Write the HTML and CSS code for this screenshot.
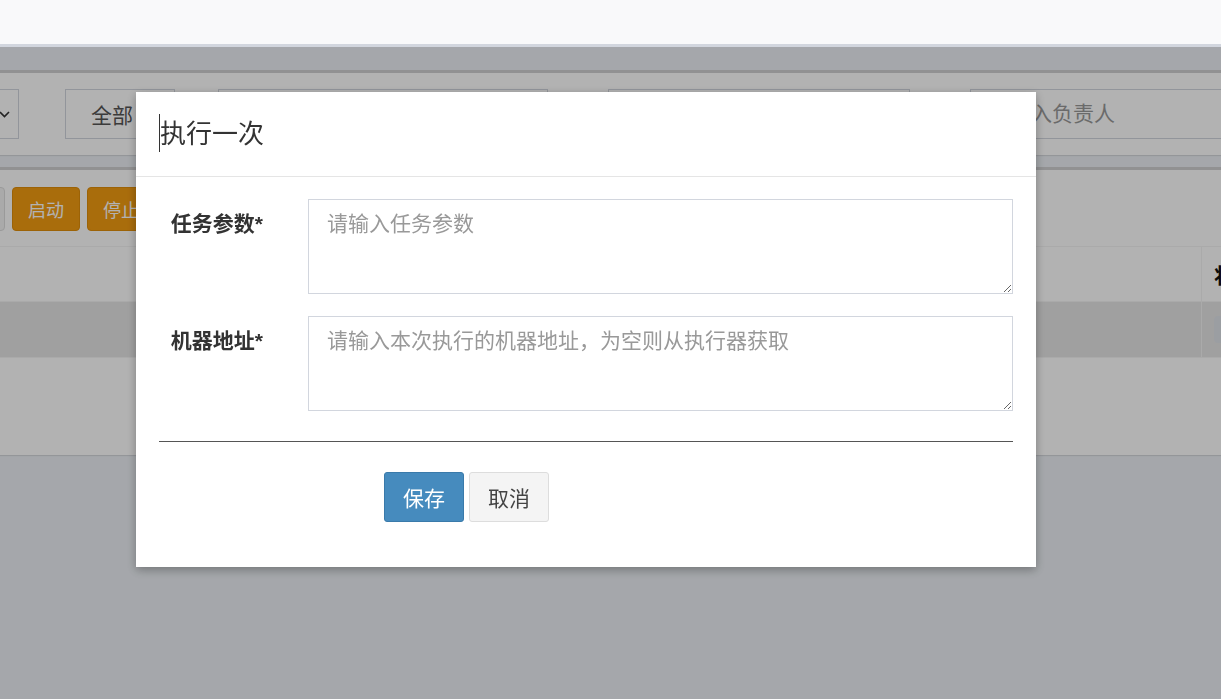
FILE: index.html
```html
<!DOCTYPE html>
<html lang="zh-CN">
<head>
    <meta charset="UTF-8">
    <meta name="viewport" content="width=device-width, initial-scale=1.0">
    <title>执行一次</title>
    <link rel="stylesheet" href="styles.css">
</head>
<body>
    <div class="topbar"></div>

    <div class="frame">
        <div class="box filter-box">
            <div class="filters">
                <div class="fake-select">
                    <svg width="11" height="7" viewBox="0 0 11 7"><path d="M1 1l4.5 4.5L10 1" fill="none" stroke="#333" stroke-width="1.6"/></svg>
                </div>
                <div class="fake-select all">全部</div>
                <input class="filter-input f1" type="text">
                <input class="filter-input f2" type="text">
                <input class="filter-input f3" type="text" placeholder="请输入负责人">
            </div>
        </div>

        <div class="box list-box">
            <div class="toolbar">
                <button class="btn-sm btn-grey"></button>
                <button class="btn-sm btn-orange">启动</button>
                <button class="btn-sm btn-orange">停止</button>
            </div>
            <table class="job-table">
                <thead>
                    <tr>
                        <th class="wide"></th>
                        <th>状态</th>
                    </tr>
                </thead>
                <tbody>
                    <tr class="active-row">
                        <td class="wide"></td>
                        <td><span class="op-btn"></span></td>
                    </tr>
                </tbody>
            </table>
        </div>
    </div>

    <div class="overlay">
        <div class="modal">
            <div class="modal-header">
                <h4 class="modal-title"><span class="caret-line"></span>执行一次</h4>
            </div>
            <div class="modal-body">
                <div class="form-group">
                    <label>任务参数*</label>
                    <textarea placeholder="请输入任务参数"></textarea>
                </div>
                <div class="form-group">
                    <label>机器地址*</label>
                    <textarea placeholder="请输入本次执行的机器地址，为空则从执行器获取"></textarea>
                </div>
                <hr>
                <div class="actions">
                    <button class="btn btn-primary">保存</button>
                    <button class="btn btn-default">取消</button>
                </div>
            </div>
        </div>
    </div>
</body>
</html>
```

FILE: styles.css
```css
body {
    margin: 0;
    padding: 0;
    overflow: hidden;
    height: 699px;
    background-color: #ecf0f5;
    font-family: "Liberation Sans", "Noto Sans CJK SC", sans-serif;
    color: #333;
}

.topbar {
    height: 44px;
    background-color: #f9f9fa;
    border-bottom: 3px solid #d2d6de;
}

.frame {
    margin-left: -120px;
    width: 1500px;
    padding-top: 23px;
}

.box {
    background-color: #ffffff;
    border-top: 3px solid #d0d0d2;
    box-shadow: 0 1px 1px rgba(0, 0, 0, 0.1);
}

.filters {
    display: flex;
    padding: 16px 0;
}

.fake-select, .filter-input {
    box-sizing: border-box;
    height: 50px;
    border: 1px solid #d2d6de;
    font-family: inherit;
    font-size: 21px;
    color: #555;
}

.fake-select {
    width: 120px;
    margin-left: 19px;
    display: flex;
    align-items: center;
    justify-content: flex-end;
    padding-right: 8px;
}

.fake-select.all {
    width: 110px;
    margin-left: 46px;
    justify-content: flex-start;
    padding-left: 25px;
}

.filter-input {
    padding: 0 18px;
    outline: none;
}

.filter-input::placeholder {
    color: #999;
}

.f1 { width: 330px; margin-left: 43px; }
.f2 { width: 302px; margin-left: 60px; }
.f3 { width: 300px; margin-left: 60px; }

.list-box {
    margin-top: 12px;
    height: 285px;
}

.toolbar {
    display: flex;
    gap: 7px;
    padding: 17px 0 0 57px;
}

.btn-sm {
    width: 68px;
    height: 44px;
    padding: 0;
    font-family: inherit;
    font-size: 18px;
    border-radius: 4px;
    border: 1px solid #ddd;
}

.btn-grey {
    background-color: #f4f4f4;
    color: #444;
}

.btn-orange {
    background-color: #f39c12;
    border-color: #e08e0b;
    color: #ffffff;
}

.job-table {
    margin-top: 15px;
    border-collapse: collapse;
    width: 1500px;
}

.job-table th, .job-table td {
    height: 54px;
    padding: 0 12px;
    text-align: left;
    border: 1px solid #f4f4f4;
    font-size: 21px;
}

.job-table th {
    font-weight: bold;
    color: #111;
}

.job-table .wide {
    width: 1296px;
}

.active-row td {
    height: 55px;
    background-color: #e6e6e6;
}

.op-btn {
    display: block;
    width: 60px;
    height: 27px;
    border-radius: 4px;
    background-color: #dfe2e8;
}

.overlay {
    position: fixed;
    top: 47px;
    left: 0;
    right: 0;
    bottom: 0;
    background-color: rgba(0, 0, 0, 0.3);
}

.modal {
    width: 900px;
    margin: 45px 0 0 136px;
    background-color: #ffffff;
    box-shadow: 0 3px 9px rgba(0, 0, 0, 0.3);
}

.modal-header {
    padding: 22px 22px 22px 23px;
    border-bottom: 1px solid #e5e5e5;
}

.modal-title {
    margin: 0;
    font-size: 26px;
    line-height: 40px;
    font-weight: normal;
    color: #333;
}

.caret-line {
    display: inline-block;
    width: 1px;
    height: 38px;
    background-color: #333;
    vertical-align: top;
}

.modal-body {
    padding: 22px 23px 45px 23px;
}

.form-group {
    display: grid;
    grid-template-columns: 104px 1fr;
    column-gap: 45px;
    margin-bottom: 22px;
}

.form-group label {
    padding-top: 10px;
    text-align: right;
    font-size: 21px;
    line-height: 30px;
    font-weight: bold;
    color: #333;
}

.form-group textarea {
    box-sizing: border-box;
    height: 95px;
    padding: 9px 18px;
    border: 1px solid #d2d6de;
    border-radius: 0;
    font-family: inherit;
    font-size: 21px;
    line-height: 30px;
    color: #555;
    outline: none;
}

.form-group textarea::placeholder {
    color: #999;
}

hr {
    margin: 30px 0 0 0;
    border: 0;
    border-top: 1px solid #555;
}

.actions {
    display: flex;
    gap: 5px;
    margin-top: 30px;
    padding-left: 225px;
}

.btn {
    width: 80px;
    height: 50px;
    padding: 0;
    font-family: inherit;
    font-size: 21px;
    border-radius: 3px;
    border: 1px solid transparent;
    cursor: pointer;
}

.btn-primary {
    background-color: #468bbe;
    border-color: #3a7aaa;
    color: #ffffff;
}

.btn-default {
    background-color: #f4f4f4;
    border-color: #ddd;
    color: #444;
}
```
